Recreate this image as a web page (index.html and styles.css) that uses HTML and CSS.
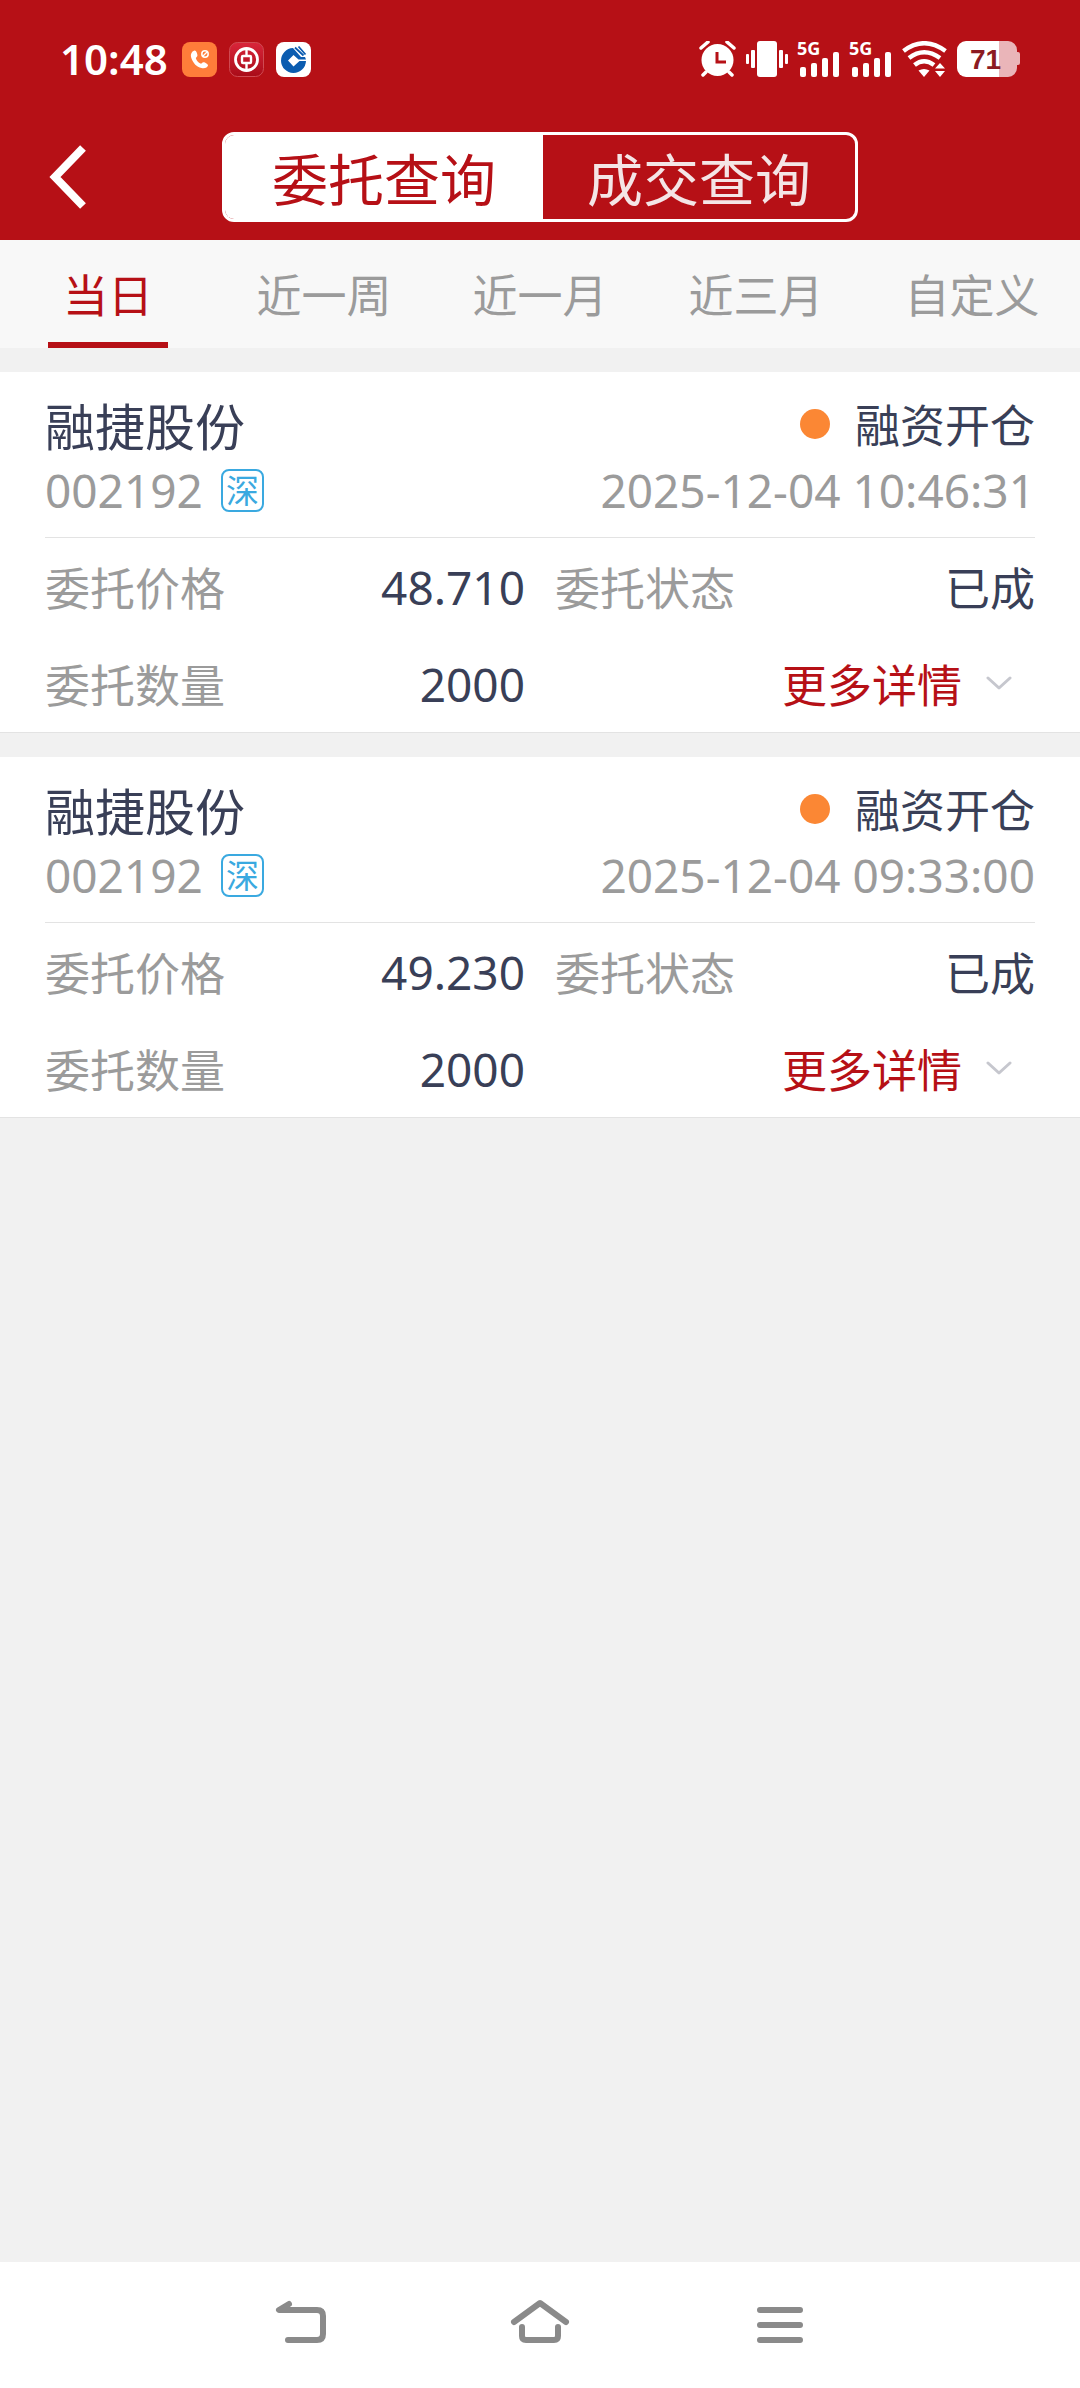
FILE: index.html
```html
<!DOCTYPE html>
<html lang="zh-CN">
<head>
<meta charset="utf-8">
<meta name="viewport" content="width=device-width, initial-scale=1">
<title>委托查询</title>
<link rel="stylesheet" href="styles.css">
</head>
<body>
<header class="header">
  <div class="status">
    <div class="status-left">
      <span class="clock">10:48</span>
      <svg width="35" height="35" viewBox="0 0 35 35" aria-hidden="true">
        <rect width="35" height="35" rx="8" fill="#ff7d3a"/>
        <path d="M12.500 8.500c-3 1-4.500 4-3 8 1.800 4.800 5 8.500 10 9.500 3.500.7 6-.6 6.500-2.500.3-1.300-3.500-3.600-4.800-3.200-1 .3-1.600 1.700-2.700 1.300-2-.8-4-3-4.600-5-.3-1.200 1.400-1.700 1.500-2.900.2-1.600-1.300-5.700-2.900-5.200z" fill="#fff"/>
        <circle cx="23" cy="12" r="3.200" fill="none" stroke="#fff" stroke-width="1.500"/>
        <path d="M21 14l4-4" stroke="#fff" stroke-width="1.300"/>
      </svg>
      <svg width="35" height="35" viewBox="0 0 35 35" aria-hidden="true">
        <defs><linearGradient id="boc" x1="0" y1="0" x2="0" y2="1"><stop offset="0" stop-color="#d9253a"/><stop offset="1" stop-color="#a90c18"/></linearGradient></defs>
        <rect x=".5" y=".5" width="34" height="34" rx="8" fill="url(#boc)" stroke="#cf4a52"/>
        <circle cx="17.500" cy="17.500" r="11" fill="none" stroke="#fff" stroke-width="2.800"/>
        <rect x="13" y="14" width="9" height="7" rx="1" fill="none" stroke="#fff" stroke-width="2.400"/>
        <path d="M17.500 7v7M17.500 21v7" stroke="#fff" stroke-width="2.400"/>
      </svg>
      <svg width="35" height="35" viewBox="0 0 35 35" aria-hidden="true">
        <rect width="35" height="35" rx="8" fill="#fff"/>
        <path d="M17 6A12.500 12.500 0 1 0 30 19h-6.500L17.500 24.500 12 18.500l5.500-5.500 5 4.500h7.500l-1-2.500h-4z" fill="#0b5cb0"/>
        <path d="M19 5.500l8.500 8M22.500 4.500l7 8" stroke="#0b5cb0" stroke-width="1.800"/>
      </svg>
    </div>
    <div class="status-right">
      <svg width="37" height="36" viewBox="0 0 37 36" aria-hidden="true">
        <circle cx="18.500" cy="19" r="16" fill="#fff"/>
        <path d="M2 7l7-6M35 7l-7-6M7 31l-3 3M30 31l3 3" stroke="#fff" stroke-width="3.500" stroke-linecap="round"/>
        <path d="M18 11v10h9" fill="none" stroke="#b61016" stroke-width="3"/>
      </svg>
      <svg width="42" height="36" viewBox="0 0 42 36" aria-hidden="true" fill="#fff">
        <rect x="11" width="20" height="36" rx="3"/>
        <rect x="5" y="9" width="4" height="18" rx="1"/><rect x="33" y="9" width="4" height="18" rx="1"/>
        <rect y="13" width="3" height="10" rx="1"/><rect x="39" y="13" width="3" height="10" rx="1"/>
      </svg>
      <svg class="signal" width="42" height="36" viewBox="0 0 42 36" fill="#fff">
        <text x="-1" y="14">5G</text>
        <rect x="2" y="26" width="6" height="10" rx="2"/><rect x="13" y="22" width="6" height="14" rx="2"/>
        <rect x="24" y="17" width="6" height="19" rx="2"/><rect x="35" y="11" width="6" height="25" rx="2"/>
      </svg>
      <svg class="signal" width="42" height="36" viewBox="0 0 42 36" fill="#fff">
        <text x="-1" y="14">5G</text>
        <rect x="2" y="26" width="6" height="10" rx="2"/><rect x="13" y="22" width="6" height="14" rx="2"/>
        <rect x="24" y="17" width="6" height="19" rx="2"/><rect x="35" y="11" width="6" height="25" rx="2"/>
      </svg>
      <svg width="45" height="36" viewBox="0 0 45 36" aria-hidden="true">
        <g fill="none" stroke="#fff" stroke-width="4.500">
          <path d="M1.500 10Q22 -5.500 43.500 10"/><path d="M7 17Q22 5.500 38 17"/><path d="M12.500 24Q22 16.500 32 24"/>
        </g>
        <path d="M16.500 29.500q5.500-3 11 0l-5.500 6.500z" fill="#fff"/>
        <path d="M33 27.500h10l-5-5.500zM33 30h10l-5 6z" fill="#fff"/>
      </svg>
      <svg class="battery" width="63" height="36" viewBox="0 0 63 36">
        <path d="M42 0h9a9 9 0 0 1 9 9v2h1q2 0 2 2v9q0 2-2 2h-1v3a9 9 0 0 1-9 9h-9z" fill="#eab5b9"/>
        <path d="M42 0H9a9 9 0 0 0-9 9v18a9 9 0 0 0 9 9h33z" fill="#fff"/>
        <text x="13" y="28">71</text>
      </svg>
    </div>
  </div>
  <nav class="titlebar">
    <button class="back" type="button" aria-label="返回">
      <svg width="40" height="64" viewBox="0 0 40 64" aria-hidden="true"><path d="M35 3L7 32l28 29" fill="none" stroke="#fff" stroke-width="8"/></svg>
    </button>
    <div class="segment">
      <button class="segment-item active" type="button">委托查询</button>
      <button class="segment-item" type="button">成交查询</button>
    </div>
  </nav>
</header>
<nav class="tabs">
  <button class="tab active" type="button">当日</button>
  <button class="tab" type="button">近一周</button>
  <button class="tab" type="button">近一月</button>
  <button class="tab" type="button">近三月</button>
  <button class="tab" type="button">自定义</button>
</nav>
<main class="orders">
  <article class="card">
    <div class="card-head">
      <div class="line">
        <h2 class="name">融捷股份</h2>
        <span class="kind"><i class="dot"></i>融资开仓</span>
      </div>
      <div class="line line-code">
        <span class="code"><span class="num">002192</span><span class="market">深</span></span>
        <time class="num">2025-12-04 10:46:31</time>
      </div>
    </div>
    <div class="details">
      <dl class="field"><dt>委托价格</dt><dd class="num">48.710</dd></dl>
      <dl class="field"><dt>委托状态</dt><dd>已成</dd></dl>
      <dl class="field"><dt>委托数量</dt><dd class="num">2000</dd></dl>
      <button class="more" type="button">更多详情
        <svg width="26" height="16" viewBox="0 0 26 16" aria-hidden="true"><path d="M2 2l11 10L24 2" fill="none" stroke="#c6c7ce" stroke-width="3" stroke-linecap="round" stroke-linejoin="round"/></svg>
      </button>
    </div>
  </article>
  <article class="card">
    <div class="card-head">
      <div class="line">
        <h2 class="name">融捷股份</h2>
        <span class="kind"><i class="dot"></i>融资开仓</span>
      </div>
      <div class="line line-code">
        <span class="code"><span class="num">002192</span><span class="market">深</span></span>
        <time class="num">2025-12-04 09:33:00</time>
      </div>
    </div>
    <div class="details">
      <dl class="field"><dt>委托价格</dt><dd class="num">49.230</dd></dl>
      <dl class="field"><dt>委托状态</dt><dd>已成</dd></dl>
      <dl class="field"><dt>委托数量</dt><dd class="num">2000</dd></dl>
      <button class="more" type="button">更多详情
        <svg width="26" height="16" viewBox="0 0 26 16" aria-hidden="true"><path d="M2 2l11 10L24 2" fill="none" stroke="#c6c7ce" stroke-width="3" stroke-linecap="round" stroke-linejoin="round"/></svg>
      </button>
    </div>
  </article>
</main>
<footer class="navbar">
  <button type="button" aria-label="返回上一页">
    <svg width="60" height="50" viewBox="0 0 60 50" aria-hidden="true"><path d="M19 7L9 13h38q6 0 6 6v18q0 6-6 6H18"/></svg>
  </button>
  <button type="button" aria-label="主屏幕">
    <svg width="60" height="50" viewBox="0 0 60 50" aria-hidden="true"><path d="M4 25L30 6l26 19M12 30v9q0 4 4 4h28q4 0 4-4v-9"/></svg>
  </button>
  <button type="button" aria-label="最近任务">
    <svg width="60" height="50" viewBox="0 0 60 50" aria-hidden="true"><path d="M10 13h40M10 28h40M10 43h40"/></svg>
  </button>
</footer>
</body>
</html>
```
FILE: styles.css
```css
* {
  box-sizing: border-box;
}

body {
  margin: 0;
  min-height: 100vh;
  display: flex;
  flex-direction: column;
  background: #f1f1f1;
  color: #393f57;
  font-family: "Noto Sans CJK SC", sans-serif;
  font-size: 45px;
}

button {
  margin: 0;
  padding: 0;
  border: 0;
  background: none;
  color: inherit;
  font: inherit;
}

svg {
  display: block;
  flex: none;
}

.header {
  background: #b61016;
  color: #fff;
}

/* Phone status bar */
.status {
  height: 118px;
  padding: 0 60px;
  display: flex;
  align-items: center;
  justify-content: space-between;
}

.status-left {
  display: flex;
  align-items: center;
  gap: 12px;
}

.clock {
  margin-right: 2px;
  font: 600 42px/60px "Noto Sans", sans-serif;
}

.status-right {
  display: flex;
  align-items: center;
  gap: 10px;
}

.signal {
  overflow: visible;
  font: 700 18px "Noto Sans", sans-serif;
}

.battery {
  font: 700 28px "Liberation Sans", sans-serif;
  fill: #8c1a22;
}

/* Title bar with the two-way switch */
.titlebar {
  height: 122px;
  padding: 14px 48px 18px;
  display: grid;
  grid-template-columns: 1fr auto 1fr;
  align-items: center;
}

.segment {
  height: 90px;
  display: flex;
  border: 3px solid #fff;
  border-radius: 12px;
  overflow: hidden;
}

.segment-item {
  padding: 0 44px;
  color: #f4e5e6;
  font-size: 56px;
  line-height: 80px;
}

.segment-item.active {
  padding: 0 47px;
  background: #fff;
  color: #b61016;
}

/* Date range tabs */
.tabs {
  height: 108px;
  display: grid;
  grid-template-columns: repeat(5, 1fr);
  background: #f8f8f8;
  color: #9b9b9b;
}

.tab {
  padding-top: 6px;
  display: flex;
  flex-direction: column;
  align-items: center;
  line-height: 96px;
}

.tab.active {
  color: #b61016;
}

.tab.active::after {
  content: "";
  width: 120px;
  height: 6px;
  background: #b61016;
}

/* Orders */
.orders {
  flex: 1;
  padding: 24px 0;
  display: flex;
  flex-direction: column;
  gap: 24px;
}

.card {
  padding: 22px 45px 0;
  border-bottom: 1px solid #e3e3e3;
  background: #fff;
}

.card-head {
  padding-bottom: 11px;
  border-bottom: 1px solid #e3e3e3;
}

.line {
  height: 60px;
  display: flex;
  align-items: center;
  justify-content: space-between;
  line-height: 60px;
}

.line-code {
  height: 72px;
  color: #9b9b9b;
}

.name {
  margin: 0;
  font-size: 50px;
  font-weight: 400;
}

.kind {
  display: flex;
  align-items: center;
  gap: 25px;
}

.dot {
  width: 30px;
  height: 30px;
  border-radius: 50%;
  background: #fb8734;
}

.num {
  font-family: "Noto Sans", sans-serif;
  font-size: 46px;
}

.code {
  display: flex;
  align-items: center;
  gap: 18px;
}

.market {
  width: 43px;
  height: 43px;
  border: 2px solid #3aa9e0;
  border-radius: 8px;
  color: #3aa9e0;
  font-size: 33px;
  line-height: 36px;
  text-align: center;
}

.details {
  display: grid;
  grid-template-columns: 1fr 1fr;
  grid-auto-rows: 97px;
  column-gap: 30px;
}

.field {
  margin: 0;
  display: flex;
  align-items: center;
  justify-content: space-between;
}

.field dt {
  color: #9b9b9b;
}

.field dd {
  margin: 0;
}

.more {
  padding-right: 23px;
  display: flex;
  align-items: center;
  justify-content: flex-end;
  gap: 24px;
  color: #b61016;
}

/* System navigation */
.navbar {
  height: 126px;
  padding: 0 calc(100% / 6) 6px;
  display: grid;
  grid-template-columns: repeat(3, 1fr);
  background: #fff;
}

.navbar button {
  display: flex;
  align-items: center;
  justify-content: center;
}

.navbar path {
  fill: none;
  stroke: #8a8a8a;
  stroke-width: 6;
  stroke-linecap: round;
  stroke-linejoin: round;
}
```
